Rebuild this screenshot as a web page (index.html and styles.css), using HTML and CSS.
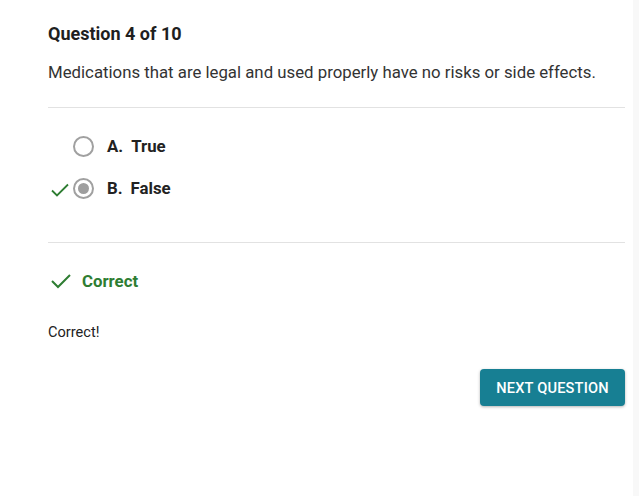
FILE: index.html
```html
<!DOCTYPE html>
<html>
<head>
<meta charset="utf-8">
<link rel="stylesheet" href="styles.css">
</head>
<body>
<div class="page">
  <main class="quiz">
    <h1 class="title">Question 4 of 10</h1>
    <p class="prompt">Medications that are legal and used properly have no risks or side effects.</p>
    <hr class="rule rule-top">
    <ul class="options">
      <li class="option">
        <span class="mark"></span>
        <span class="radio"></span>
        <span class="label"><span class="letter">A.</span>True</span>
      </li>
      <li class="option">
        <span class="mark">
          <svg width="20" height="16" viewBox="0 0 20 16"><path d="M2 8.5 L7 13.5 L18 2.5" fill="none" stroke="#2e7d32" stroke-width="1.8"/></svg>
        </span>
        <span class="radio radio-on"></span>
        <span class="label"><span class="letter">B.</span>False</span>
      </li>
    </ul>
    <hr class="rule rule-bottom">
    <div class="result">
      <svg class="result-icon" width="22" height="16" viewBox="0 0 22 16"><path d="M2 8 L8 14 L20 2" fill="none" stroke="#2e7d32" stroke-width="2"/></svg>
      <span class="result-text">Correct</span>
    </div>
    <p class="feedback">Correct!</p>
    <div class="actions">
      <button class="next">NEXT QUESTION</button>
    </div>
  </main>
  <div class="gutter"></div>
</div>
</body>
</html>
```
FILE: styles.css
```css
html, body {
  margin: 0;
  padding: 0;
  background: #ffffff;
  font-family: Roboto, "Liberation Sans", sans-serif;
  color: #222;
}
.page {
  display: flex;
  height: 496px;
}
.quiz {
  width: 577px;
  padding: 0 8px 0 48px;
}
.gutter {
  flex: 1;
  background: #f8f8f8;
}
.title {
  margin: 23px 0 0;
  font-size: 18px;
  font-weight: 700;
  line-height: 22px;
  color: #1f1f1f;
}
.prompt {
  margin: 16px 0 0;
  font-size: 16.8px;
  line-height: 22px;
  color: #333;
}
.rule {
  border: 0;
  border-top: 1px solid #e2e2e2;
  margin: 0;
}
.rule-top {
  margin-top: 24px;
}
.options {
  list-style: none;
  margin: 0;
  padding: 27px 0 0;
}
.option {
  display: flex;
  align-items: center;
  height: 22px;
  margin-bottom: 20px;
}
.option:last-child {
  margin-bottom: 0;
}
.mark {
  width: 25px;
  height: 22px;
  display: flex;
  align-items: center;
  padding: 3px 0 0 2px;
  box-sizing: border-box;
}
.radio {
  width: 21px;
  height: 21px;
  border: 2px solid #a0a0a0;
  border-radius: 50%;
  box-sizing: border-box;
  display: flex;
  align-items: center;
  justify-content: center;
}
.radio-on::after {
  content: "";
  width: 11px;
  height: 11px;
  border-radius: 50%;
  background: #9e9e9e;
}
.label {
  margin-left: 13px;
  font-size: 16.8px;
  font-weight: 700;
  color: #222;
}
.letter {
  margin-right: 8px;
}
.rule-bottom {
  margin-top: 43px;
}
.result {
  display: flex;
  align-items: center;
  margin-top: 28px;
  height: 20px;
}
.result-icon {
  margin-left: 2px;
}
.result-text {
  margin-left: 10px;
  font-size: 16.8px;
  font-weight: 700;
  color: #2e7d32;
}
.feedback {
  margin: 32px 0 0;
  font-size: 14.6px;
  line-height: 18px;
  color: #222;
}
.actions {
  display: flex;
  justify-content: flex-end;
  margin-top: 28px;
}
.next {
  width: 145px;
  height: 37px;
  border: 0;
  border-radius: 4px;
  background: #177f93;
  color: #fff;
  font-family: Roboto, "Liberation Sans", sans-serif;
  font-size: 14.6px;
  font-weight: 500;
  letter-spacing: 0.2px;
  box-shadow: 0 1px 3px rgba(0,0,0,0.3);
}
```
